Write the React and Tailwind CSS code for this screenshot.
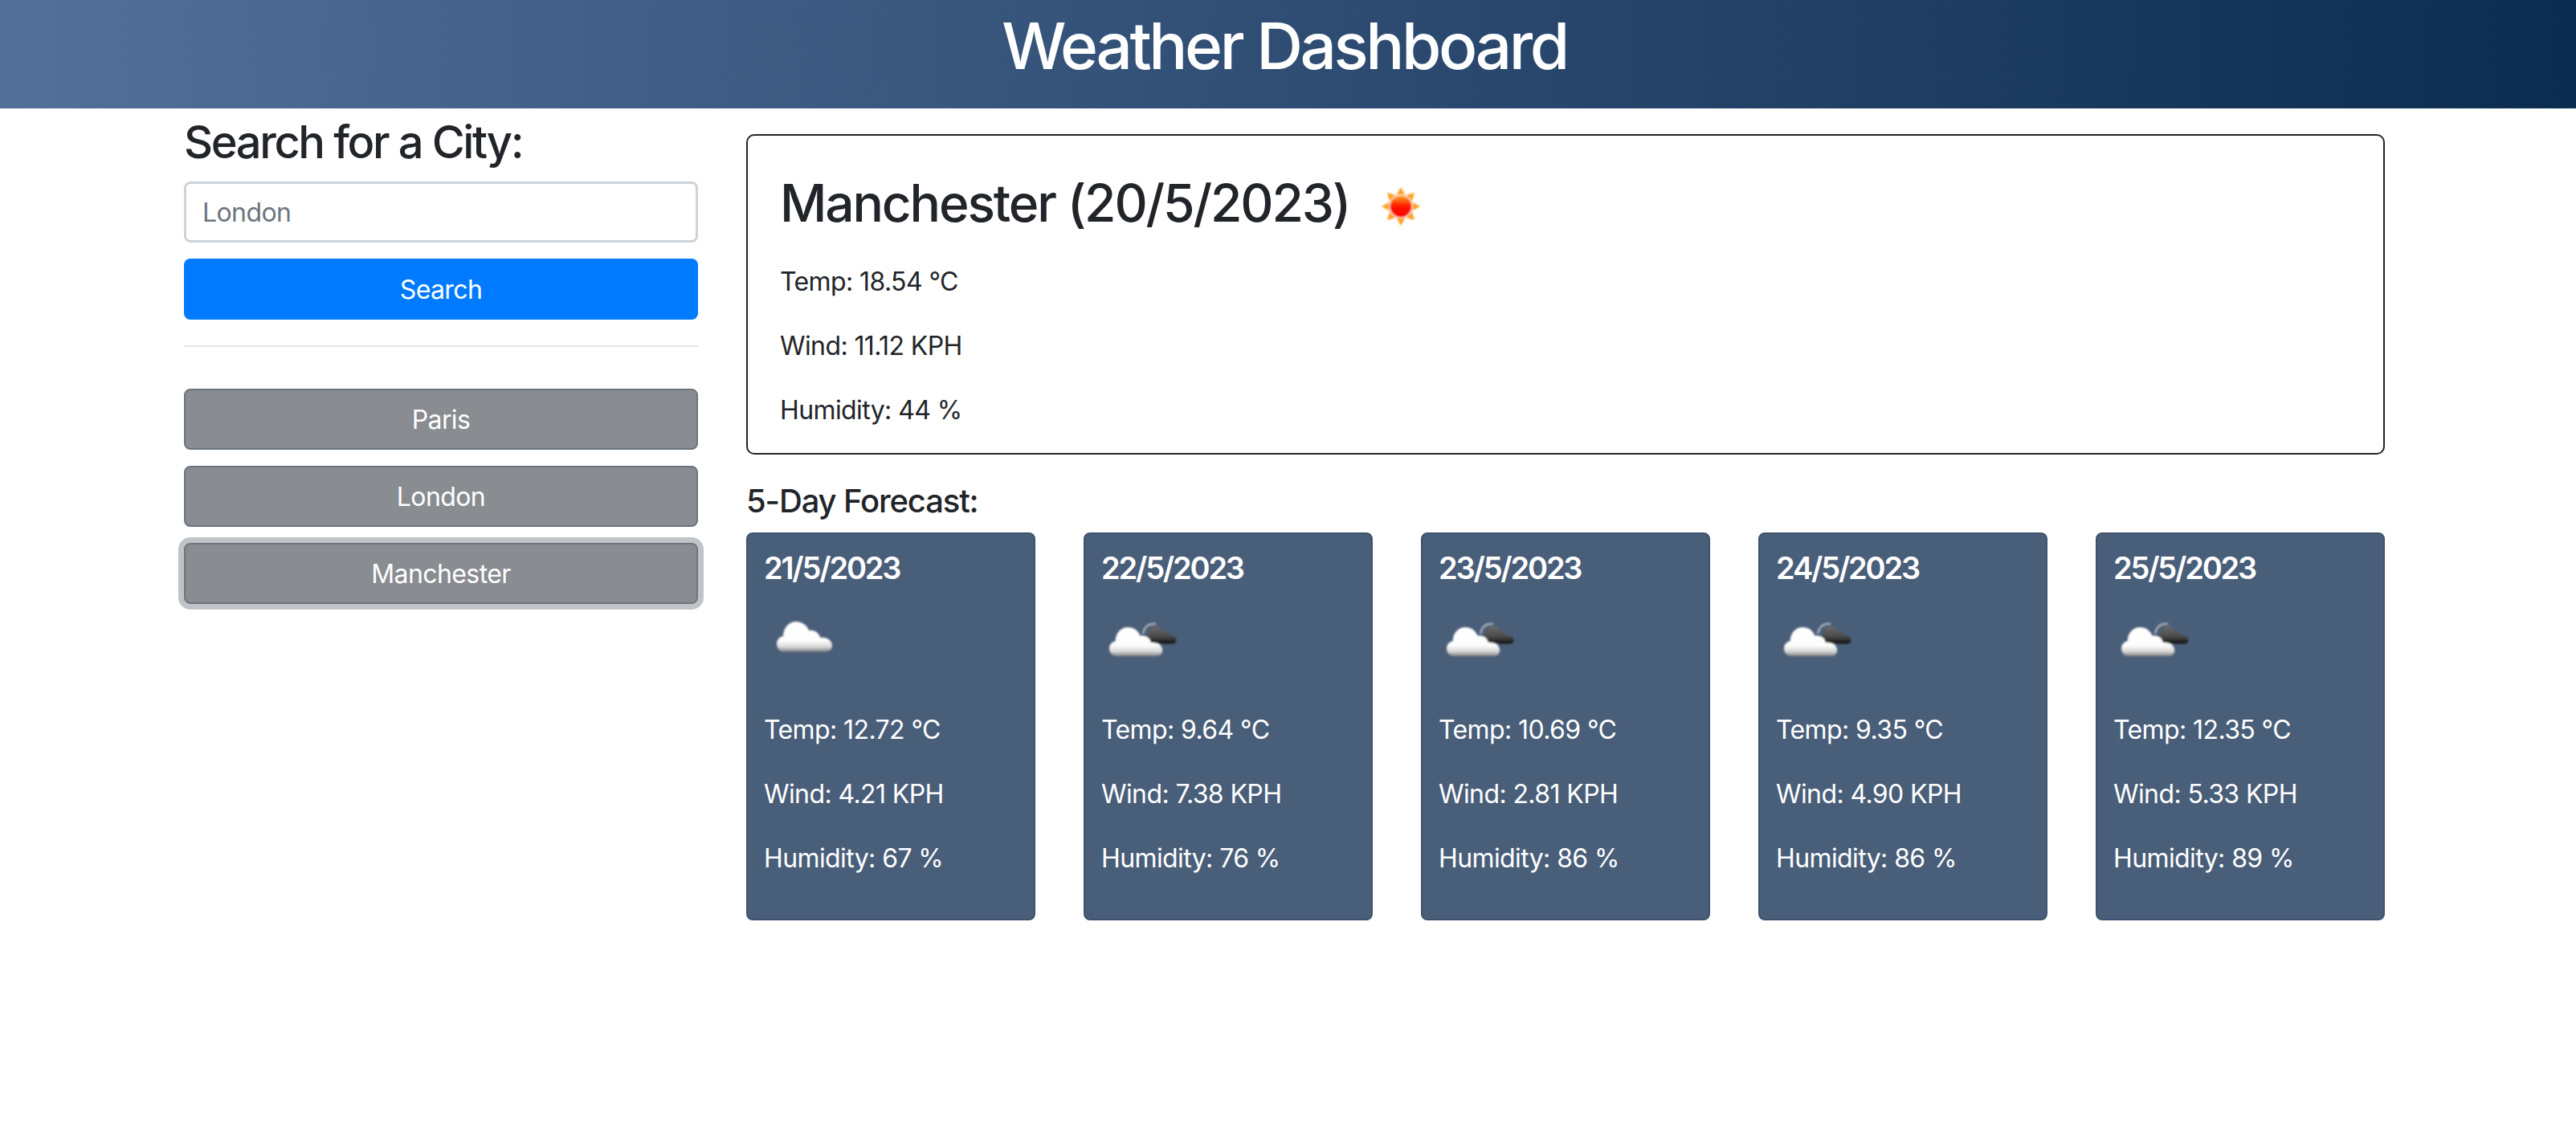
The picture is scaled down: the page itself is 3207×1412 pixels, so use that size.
import React from "react";

const cloudPath = "M10,39 C4,39 0,34 0,29 C0,24 3,20 8,19 C8,9 15,1 24,1 C32,1 38,6 40,12 C47,11 53,15 54,21 C60,20 69,23 69,31 C69,36 65,39 60,39 Z";

function Defs() {
  return (
    <svg width="0" height="0" className="absolute">
      <defs>
        <linearGradient id="white" x1="0" y1="0" x2="0" y2="1">
          <stop offset="0" stopColor="#ffffff" />
          <stop offset="0.62" stopColor="#fdfdfd" />
          <stop offset="0.82" stopColor="#d8d8d8" />
          <stop offset="0.92" stopColor="#a8a8a8" />
          <stop offset="1" stopColor="#6a6f78" />
        </linearGradient>
        <linearGradient id="dark" x1="0" y1="0" x2="0" y2="1">
          <stop offset="0" stopColor="#6a6a6a" />
          <stop offset="0.6" stopColor="#4a4a4a" />
          <stop offset="1" stopColor="#0c0c0c" />
        </linearGradient>
        <linearGradient id="sunfill" x1="0" y1="0" x2="0" y2="1">
          <stop offset="0" stopColor="#ffa820" />
          <stop offset="0.5" stopColor="#ff1500" />
          <stop offset="1" stopColor="#ff0000" />
        </linearGradient>
        <filter id="soft" x="-10%" y="-10%" width="120%" height="120%">
          <feGaussianBlur stdDeviation="0.8" />
        </filter>
      </defs>
    </svg>
  );
}

function Sun() {
  const rays = [0, 45, 90, 135, 180, 225, 270, 315];
  return (
    <svg width="100" height="100" viewBox="0 0 100 100" className="block shrink-0">
      <g filter="url(#soft)">
        {rays.map((a) => (
          <polygon key={a} points="44,37 56,37 50,26" fill="#ff9d1e" transform={`rotate(${a} 50 50)`} />
        ))}
        <circle cx="50" cy="50" r="15" fill="#ffe7d0" />
        <circle cx="50" cy="50" r="13.5" fill="url(#sunfill)" />
      </g>
    </svg>
  );
}

function Cloud() {
  return (
    <svg width="100" height="100" viewBox="0 0 100 100" className="block">
      <g filter="url(#soft)" transform="translate(16,30)">
        <path d={cloudPath} fill="url(#white)" />
      </g>
    </svg>
  );
}

function BrokenCloud() {
  return (
    <svg width="100" height="100" viewBox="0 0 100 100" className="block">
      <g filter="url(#soft)">
        <path d="M52,46 C54,37 60,33 68,34" fill="none" stroke="#a9adb2" strokeWidth="2.5" />
        <g transform="translate(54,36) scale(0.57,0.58)">
          <path d={cloudPath} fill="url(#dark)" />
        </g>
        <g transform="translate(10,37) scale(0.96)">
          <path d={cloudPath} fill="url(#white)" />
        </g>
      </g>
    </svg>
  );
}

const days = [
  { date: "21/5/2023", temp: "12.72", wind: "4.21", hum: "67", Icon: Cloud },
  { date: "22/5/2023", temp: "9.64", wind: "7.38", hum: "76", Icon: BrokenCloud },
  { date: "23/5/2023", temp: "10.69", wind: "2.81", hum: "86", Icon: BrokenCloud },
  { date: "24/5/2023", temp: "9.35", wind: "4.90", hum: "86", Icon: BrokenCloud },
  { date: "25/5/2023", temp: "12.35", wind: "5.33", hum: "89", Icon: BrokenCloud },
];

function Stat({ children }) {
  return <p className="m-0 mb-8 text-[32px] leading-[48px] tracking-[-0.6px]">{children}</p>;
}

function HistoryButton({ label, focused }) {
  return (
    <button
      className={
        "w-full h-[76px] pt-[2px] rounded-lg border-2 border-[#6c757d] bg-[#898c90] text-white text-[32px] tracking-[-0.6px] " +
        (focused ? "ring-[7px] ring-[#c0c3c7]" : "")
      }
    >
      {label}
    </button>
  );
}

export default function App() {
  return (
    <div className="min-h-[1412px] bg-white text-[#212529] font-['Inter','Liberation_Sans',sans-serif]">
      <Defs />
      <header className="h-[135px] flex items-center justify-center pr-[9px] bg-gradient-to-r from-[#546f99] to-[#0a2d4f]">
        <h1 className="m-0 text-white text-[80px] leading-[96px] font-medium tracking-[-3.4px] -mt-[22px]">Weather Dashboard</h1>
      </header>
      <div className="flex gap-[60px] pl-[229px]">
        <aside className="w-[640px] shrink-0">
          <h3 className="mt-[9px] mb-[15px] text-[56px] leading-[67px] font-medium tracking-[-2.4px]">Search for a City:</h3>
          <div className="h-[76px] pt-[2px] rounded-lg border-[3px] border-[#ced4da] bg-white px-[20px] flex items-center text-[32px] text-[#6c757d] tracking-[-0.6px]">London</div>
          <button className="mt-5 w-full h-[76px] pt-[2px] rounded-lg bg-[#007bff] text-white text-[32px] tracking-[-0.6px]">Search</button>
          <hr className="mt-8 mb-[52px] border-0 h-[2px] bg-[#e4e6e8]" />
          <div className="flex flex-col gap-5">
            <HistoryButton label="Paris" />
            <HistoryButton label="London" />
            <HistoryButton label="Manchester" focused />
          </div>
        </aside>
        <main className="w-[2040px] shrink-0 pt-8">
          <section className="h-[399px] rounded-[10px] border-2 border-[#212529] px-10 pt-[38px]">
            <div className="flex items-center h-[100px] mb-5">
              <h2 className="m-0 mb-[10px] text-[64px] leading-[77px] font-medium tracking-[-2.15px]">Manchester (20/5/2023)</h2>
              <div className="ml-[14px]"><Sun /></div>
            </div>
            <Stat>Temp: 18.54 °C</Stat>
            <Stat>Wind: 11.12 KPH</Stat>
            <Stat>Humidity: 44 %</Stat>
          </section>
          <h4 className="mt-[33px] mb-[15px] pt-[1px] text-[40px] leading-[48px] font-medium tracking-[-1.15px]">5-Day Forecast:</h4>
          <div className="flex justify-between">
            {days.map(({ date, temp, wind, hum, Icon }) => (
              <div key={date} className="w-[360px] h-[483px] rounded-lg border-2 border-[#3f526d] bg-[#495e79] px-5 pt-5 text-white">
                <h5 className="m-0 -mt-[2px] text-[38px] leading-[48px] font-semibold tracking-[-2.2px]">{date}</h5>
                <div className="mt-3 mb-[42px]"><Icon /></div>
                <Stat>Temp: {temp} °C</Stat>
                <Stat>Wind: {wind} KPH</Stat>
                <Stat>Humidity: {hum} %</Stat>
              </div>
            ))}
          </div>
        </main>
      </div>
    </div>
  );
}
